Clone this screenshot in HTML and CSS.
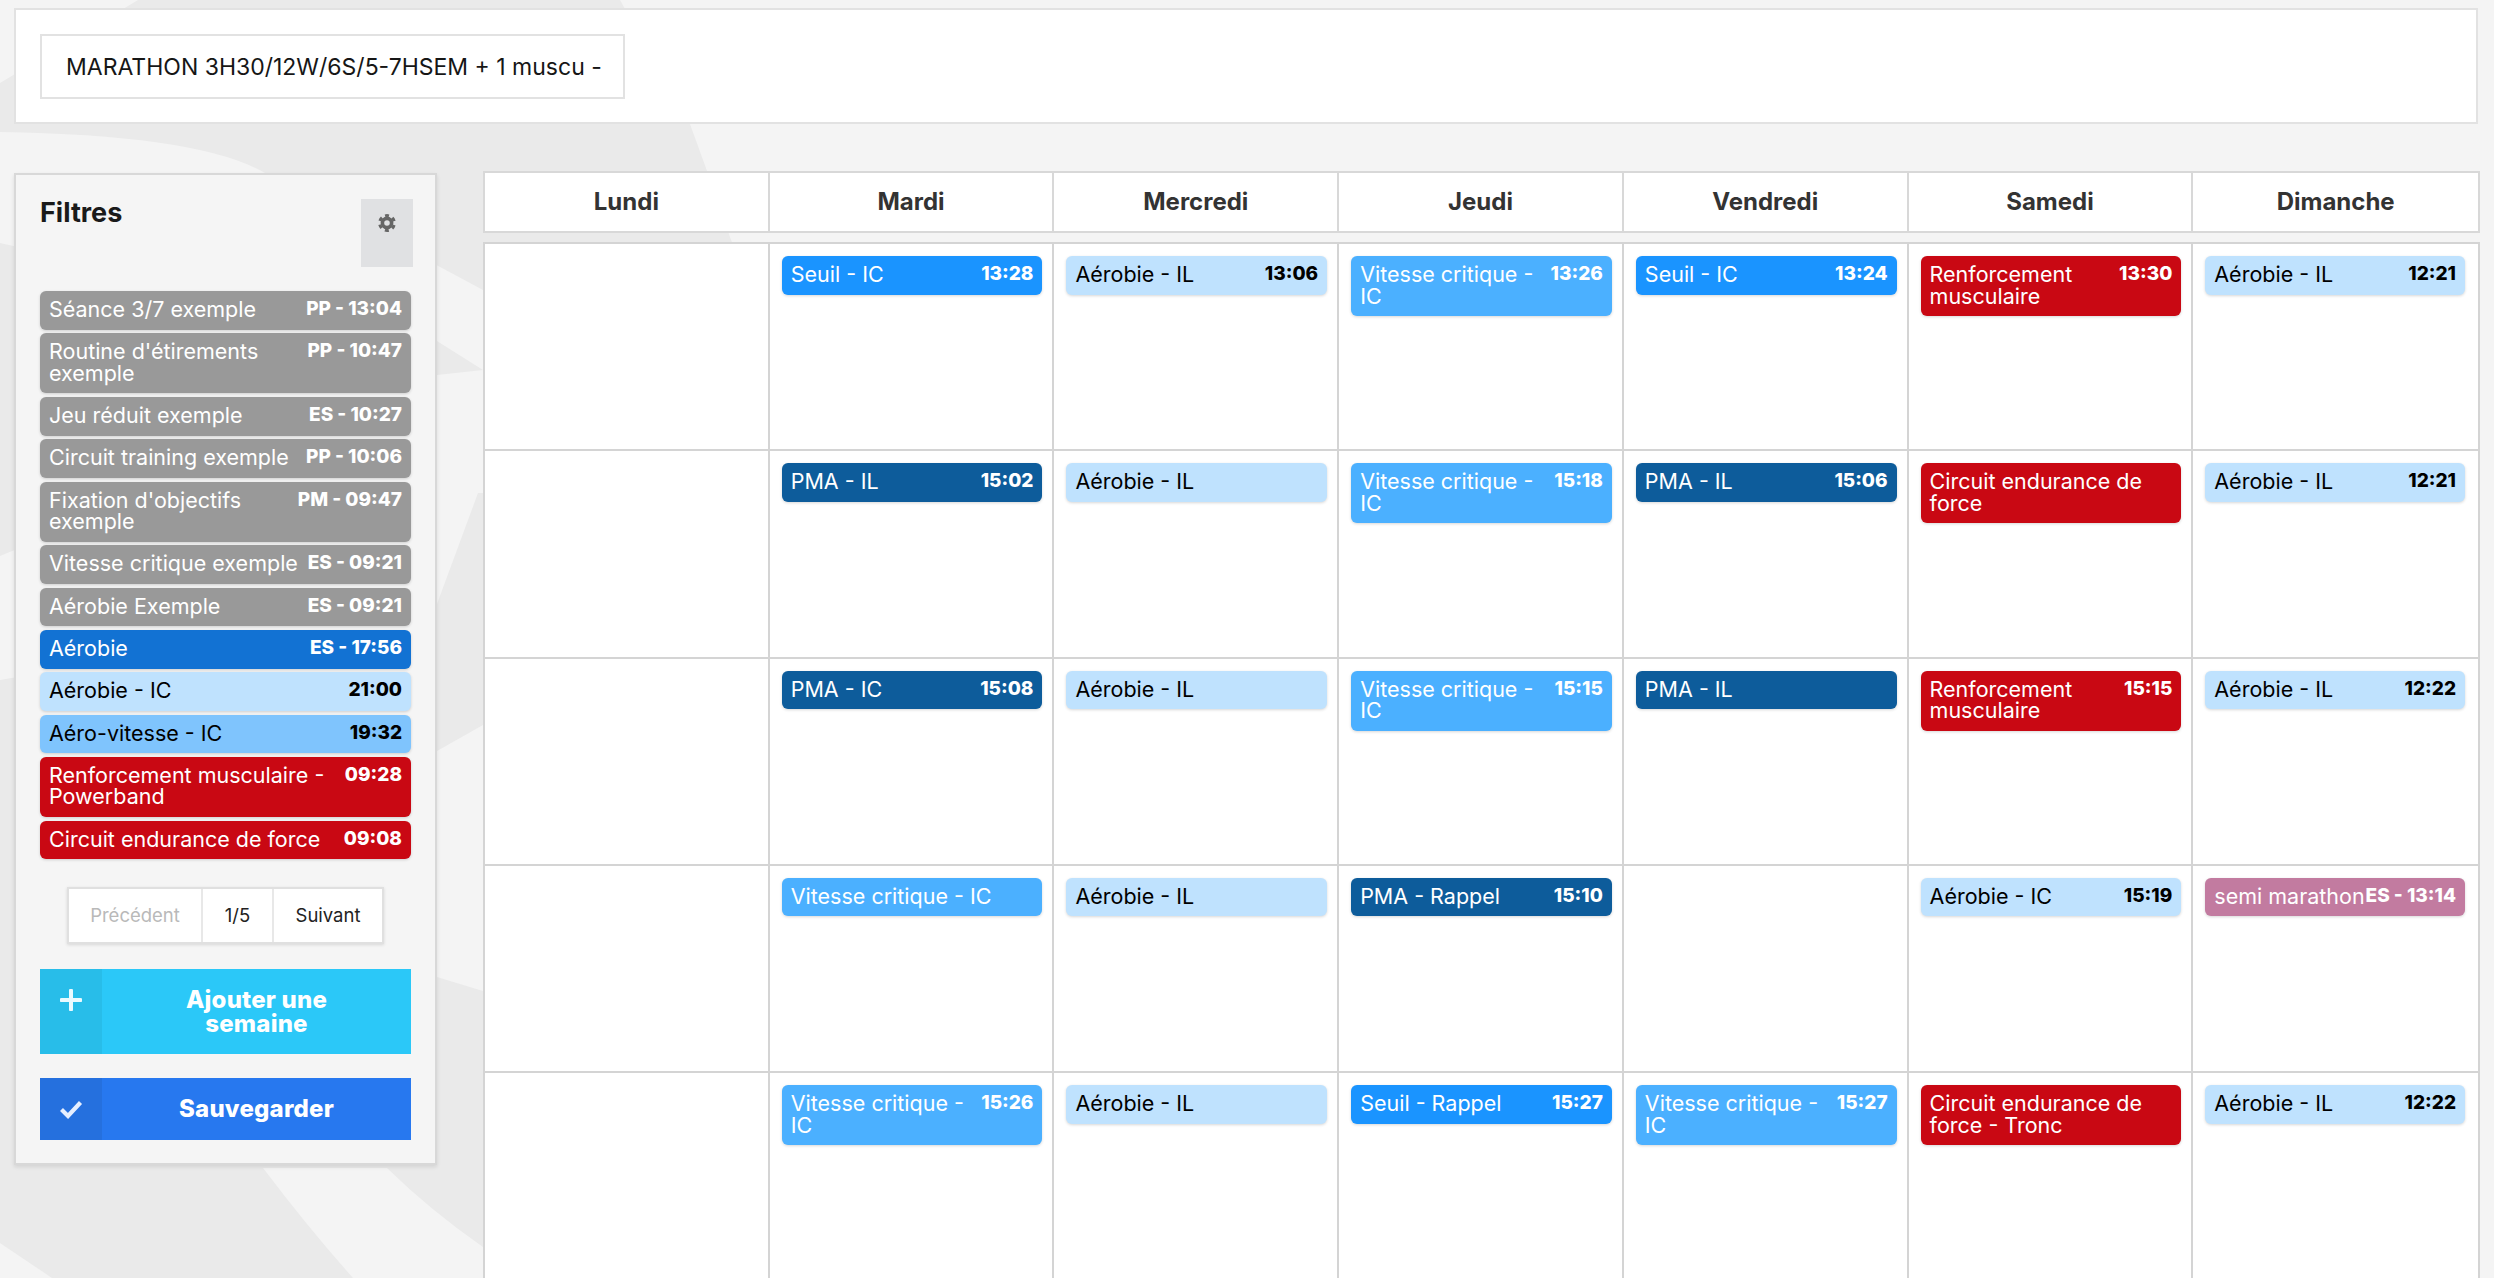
FILE: index.html
```html
<!DOCTYPE html>
<html lang="fr">
<head>
<meta charset="utf-8">
<title>Plan</title>
<link rel="stylesheet" href="styles.css">
</head>
<body>
<svg class="bg" width="2494" height="1278" viewBox="0 0 2494 1278" aria-hidden="true">
  <path class="bg-dark" d="M138 0L620 0L690 124L707 171L731 240L760 300L483 1278L0 1278L0 83Z"/>
  <path class="bg-light" d="M0 132Q200 135 265 173L483 290L483 370L437 341L0 243Z"/>
  <path class="bg-light" d="M483 370L437 375L0 556L0 680L437 604L478 493L483 493Z"/>
  <path class="bg-light" d="M437 751L483 725L483 991L437 977L380 850Z"/>
  <path class="bg-light" d="M263 1168Q310 1230 353 1278L483 1278L483 1247Q430 1210 387 1168Z"/>
  <path class="bg-light" d="M0 1243L52 1278L0 1278Z"/>
</svg>
<div class="page">
  <header class="topbar">
    <div class="plan-select">MARATHON 3H30/12W/6S/5-7HSEM + 1 muscu -</div>
  </header>
  <main class="main">
    <aside class="panel">
      <div class="panel-head">
        <h2 class="panel-title">Filtres</h2>
        <div class="gear-btn">
          <svg width="18" height="18" viewBox="0 0 18 18"><circle cx="9" cy="9" r="4.6" fill="none" stroke="#666" stroke-width="3.6"/><circle cx="9" cy="9" r="7.4" fill="none" stroke="#666" stroke-width="3" stroke-dasharray="3.9 3.85" transform="rotate(-105 9 9)"/></svg>
        </div>
      </div>
      <div class="list">
        <div class="ev grey"><span class="name">Séance 3/7 exemple</span><span class="time">PP - 13:04</span></div>
        <div class="ev grey"><span class="name">Routine d'étirements exemple</span><span class="time">PP - 10:47</span></div>
        <div class="ev grey"><span class="name">Jeu réduit exemple</span><span class="time">ES - 10:27</span></div>
        <div class="ev grey"><span class="name">Circuit training exemple</span><span class="time">PP - 10:06</span></div>
        <div class="ev grey"><span class="name">Fixation d'objectifs exemple</span><span class="time">PM - 09:47</span></div>
        <div class="ev grey"><span class="name">Vitesse critique exemple</span><span class="time">ES - 09:21</span></div>
        <div class="ev grey"><span class="name">Aérobie Exemple</span><span class="time">ES - 09:21</span></div>
        <div class="ev royal"><span class="name">Aérobie</span><span class="time">ES - 17:56</span></div>
        <div class="ev light"><span class="name">Aérobie - IC</span><span class="time">21:00</span></div>
        <div class="ev sky"><span class="name">Aéro-vitesse - IC</span><span class="time">19:32</span></div>
        <div class="ev red"><span class="name">Renforcement musculaire - Powerband</span><span class="time">09:28</span></div>
        <div class="ev red"><span class="name">Circuit endurance de force</span><span class="time">09:08</span></div>
      </div>
      <nav class="pager">
        <span class="pg pg-prev">Précédent</span><span class="pg pg-num">1/5</span><span class="pg pg-next">Suivant</span>
      </nav>
      <div class="action add">
        <span class="action-icon"><svg width="22" height="22" viewBox="0 0 22 22"><path d="M11 1.5V20.500M1.500 11H20.500" fill="none" stroke="#eafaff" stroke-width="4" stroke-linecap="round"/></svg></span>
        <span class="action-label">Ajouter une<br>semaine</span>
      </div>
      <div class="action save">
        <span class="action-icon"><svg width="24" height="20" viewBox="0 0 24 20"><path d="M2.500 10.500L9 17L21.500 3.500" fill="none" stroke="#e6efff" stroke-width="4.200"/></svg></span>
        <span class="action-label">Sauvegarder</span>
      </div>
    </aside>
    <section class="cal">
      <div class="cal-head">
        <div class="day">Lundi</div><div class="day">Mardi</div><div class="day">Mercredi</div><div class="day">Jeudi</div><div class="day">Vendredi</div><div class="day">Samedi</div><div class="day">Dimanche</div>
      </div>
      <div class="cal-body">
        <div class="cell"></div>
        <div class="cell"><div class="ev blue"><span class="name">Seuil - IC</span><span class="time">13:28</span></div></div>
        <div class="cell"><div class="ev light"><span class="name">Aérobie - IL</span><span class="time">13:06</span></div></div>
        <div class="cell"><div class="ev mid"><span class="name">Vitesse critique - IC</span><span class="time">13:26</span></div></div>
        <div class="cell"><div class="ev blue"><span class="name">Seuil - IC</span><span class="time">13:24</span></div></div>
        <div class="cell"><div class="ev red"><span class="name">Renforcement musculaire</span><span class="time">13:30</span></div></div>
        <div class="cell"><div class="ev light"><span class="name">Aérobie - IL</span><span class="time">12:21</span></div></div>

        <div class="cell"></div>
        <div class="cell"><div class="ev dark"><span class="name">PMA - IL</span><span class="time">15:02</span></div></div>
        <div class="cell"><div class="ev light"><span class="name">Aérobie - IL</span></div></div>
        <div class="cell"><div class="ev mid"><span class="name">Vitesse critique - IC</span><span class="time">15:18</span></div></div>
        <div class="cell"><div class="ev dark"><span class="name">PMA - IL</span><span class="time">15:06</span></div></div>
        <div class="cell"><div class="ev red"><span class="name">Circuit endurance de force</span></div></div>
        <div class="cell"><div class="ev light"><span class="name">Aérobie - IL</span><span class="time">12:21</span></div></div>

        <div class="cell"></div>
        <div class="cell"><div class="ev dark"><span class="name">PMA - IC</span><span class="time">15:08</span></div></div>
        <div class="cell"><div class="ev light"><span class="name">Aérobie - IL</span></div></div>
        <div class="cell"><div class="ev mid"><span class="name">Vitesse critique - IC</span><span class="time">15:15</span></div></div>
        <div class="cell"><div class="ev dark"><span class="name">PMA - IL</span></div></div>
        <div class="cell"><div class="ev red"><span class="name">Renforcement musculaire</span><span class="time">15:15</span></div></div>
        <div class="cell"><div class="ev light"><span class="name">Aérobie - IL</span><span class="time">12:22</span></div></div>

        <div class="cell"></div>
        <div class="cell"><div class="ev mid"><span class="name">Vitesse critique - IC</span></div></div>
        <div class="cell"><div class="ev light"><span class="name">Aérobie - IL</span></div></div>
        <div class="cell"><div class="ev dark"><span class="name">PMA - Rappel</span><span class="time">15:10</span></div></div>
        <div class="cell"></div>
        <div class="cell"><div class="ev light"><span class="name">Aérobie - IC</span><span class="time">15:19</span></div></div>
        <div class="cell"><div class="ev pink"><span class="name">semi marathon</span><span class="time">ES - 13:14</span></div></div>

        <div class="cell"></div>
        <div class="cell"><div class="ev mid"><span class="name">Vitesse critique - IC</span><span class="time">15:26</span></div></div>
        <div class="cell"><div class="ev light"><span class="name">Aérobie - IL</span></div></div>
        <div class="cell"><div class="ev blue"><span class="name">Seuil - Rappel</span><span class="time">15:27</span></div></div>
        <div class="cell"><div class="ev mid"><span class="name">Vitesse critique - IC</span><span class="time">15:27</span></div></div>
        <div class="cell"><div class="ev red"><span class="name">Circuit endurance de force - Tronc</span></div></div>
        <div class="cell"><div class="ev light"><span class="name">Aérobie - IL</span><span class="time">12:22</span></div></div>
      </div>
    </section>
  </main>
</div>
</body>
</html>
```

FILE: styles.css
```css
* { box-sizing: border-box; }
html, body { margin: 0; height: 1278px; overflow: hidden; }
body {
  background: #f4f4f4;
  font-family: Inter, "Noto Sans", sans-serif;
  color: #111;
  position: relative;
}
.bg { position: absolute; left: 0; top: 0; }
.bg-dark { fill: #eaeaea; }
.bg-light { fill: #f4f4f4; }
.page { position: relative; padding: 8px 16px 0 14px; }

.topbar {
  height: 116px;
  background: #fff;
  border: 2px solid #e2e2e2;
  padding: 24px;
}
.plan-select {
  width: 585px;
  height: 65px;
  border: 2px solid #e2e2e2;
  padding: 0 16px 0 24px;
  display: flex;
  align-items: center;
  font-size: 23px;
  white-space: nowrap;
  overflow: hidden;
  color: #161616;
}

.main { display: flex; align-items: flex-start; margin-top: 47px; margin-right: -2px; }
.panel {
  width: 423px;
  flex: none;
  margin-top: 2px;
  height: 992px;
  background: #f5f5f5;
  border: 2px solid #d8d8d8;
  box-shadow: 0 2px 4px rgba(0,0,0,.1);
  padding: 24px;
}
.panel-head { display: flex; justify-content: space-between; align-items: flex-start; margin: 0 -2px 24px 0; }
.panel-title { margin: 0; font-size: 27px; line-height: 28px; font-weight: 700; color: #1a1a1a; }
.gear-btn {
  width: 52px;
  height: 68px;
  background: #e0e1e3;
  display: flex;
  justify-content: center;
  padding-top: 15px;
}

.list { display: flex; flex-direction: column; gap: 3.8px; }
.ev {
  display: flex;
  justify-content: space-between;
  align-items: flex-start;
  padding: 8px 9px 9px;
  border-radius: 6px;
  box-shadow: 0 1px 3px rgba(0,0,0,.16);
  font-size: 21.5px;
  line-height: 21.5px;
  color: #fff;
}
.name { min-width: 0; }
.time { flex: none; font-size: 19px; font-weight: 800; line-height: 20px; white-space: nowrap; }
.grey { background: #999; }
.royal { background: #1272d3; }
.blue { background: #1a94ff; }
.dark { background: #0d5c9b; }
.mid { background: #4bb0ff; }
.sky { background: #7fc4fd; color: #000; }
.light { background: #bfe2fe; color: #000; }
.red { background: #c90813; }
.pink { background: #c27ba0; }

.pager {
  display: flex;
  width: 317px;
  height: 57px;
  margin: 28px auto 25px;
  background: #fff;
  border: 2px solid #e0e0e0;
  box-shadow: 0 1px 3px rgba(0,0,0,.12);
  font-size: 18.5px;
  color: #222;
}
.pg { display: flex; align-items: center; justify-content: center; padding-bottom: 2px; }
.pg-prev { width: 134px; color: #b9b9b9; border-right: 2px solid #e8e8e8; }
.pg-num { width: 71px; border-right: 2px solid #e8e8e8; }
.pg-next { flex: 1; }

.action { display: flex; color: #fff; font-weight: 800; font-size: 24px; letter-spacing: .2px; line-height: 24px; }
.action-icon { width: 62px; flex: none; display: flex; justify-content: center; }
.action-label { flex: 1; text-align: center; }
.add { height: 85px; background: #2bc8f8; margin-bottom: 24px; }
.add .action-icon { background: #28bde9; padding-top: 20px; }
.add .action-label { padding-top: 19px; }
.save { height: 62px; background: #2778ef; align-items: center; }
.save .action-icon { background: #2570de; height: 100%; align-items: center; }

.cal { flex: 1; margin-left: 46px; min-width: 0; }
.cal-head {
  display: grid;
  grid-template-columns: repeat(7, 1fr);
  height: 62px;
  background: #fff;
  border: 2px solid #d8d8d8;
}
.day {
  display: flex;
  align-items: center;
  justify-content: center;
  padding-bottom: 2px;
  font-size: 24px;
  font-weight: 700;
  color: #333;
  border-right: 2px solid #d8d8d8;
}
.day:last-child { border-right: 0; }
.cal-body {
  display: grid;
  grid-template-columns: repeat(7, 1fr);
  grid-auto-rows: 207.33px;
  margin-top: 9px;
  background: #fff;
  border: 2px solid #d4d4d4;
  border-bottom: 0;
}
.cell {
  padding: 12px 10px 0 12px;
  border-right: 2px solid #d4d4d4;
  border-bottom: 2px solid #d4d4d4;
}
.cell:nth-child(7n) { border-right: 0; padding-right: 13px; }
```
